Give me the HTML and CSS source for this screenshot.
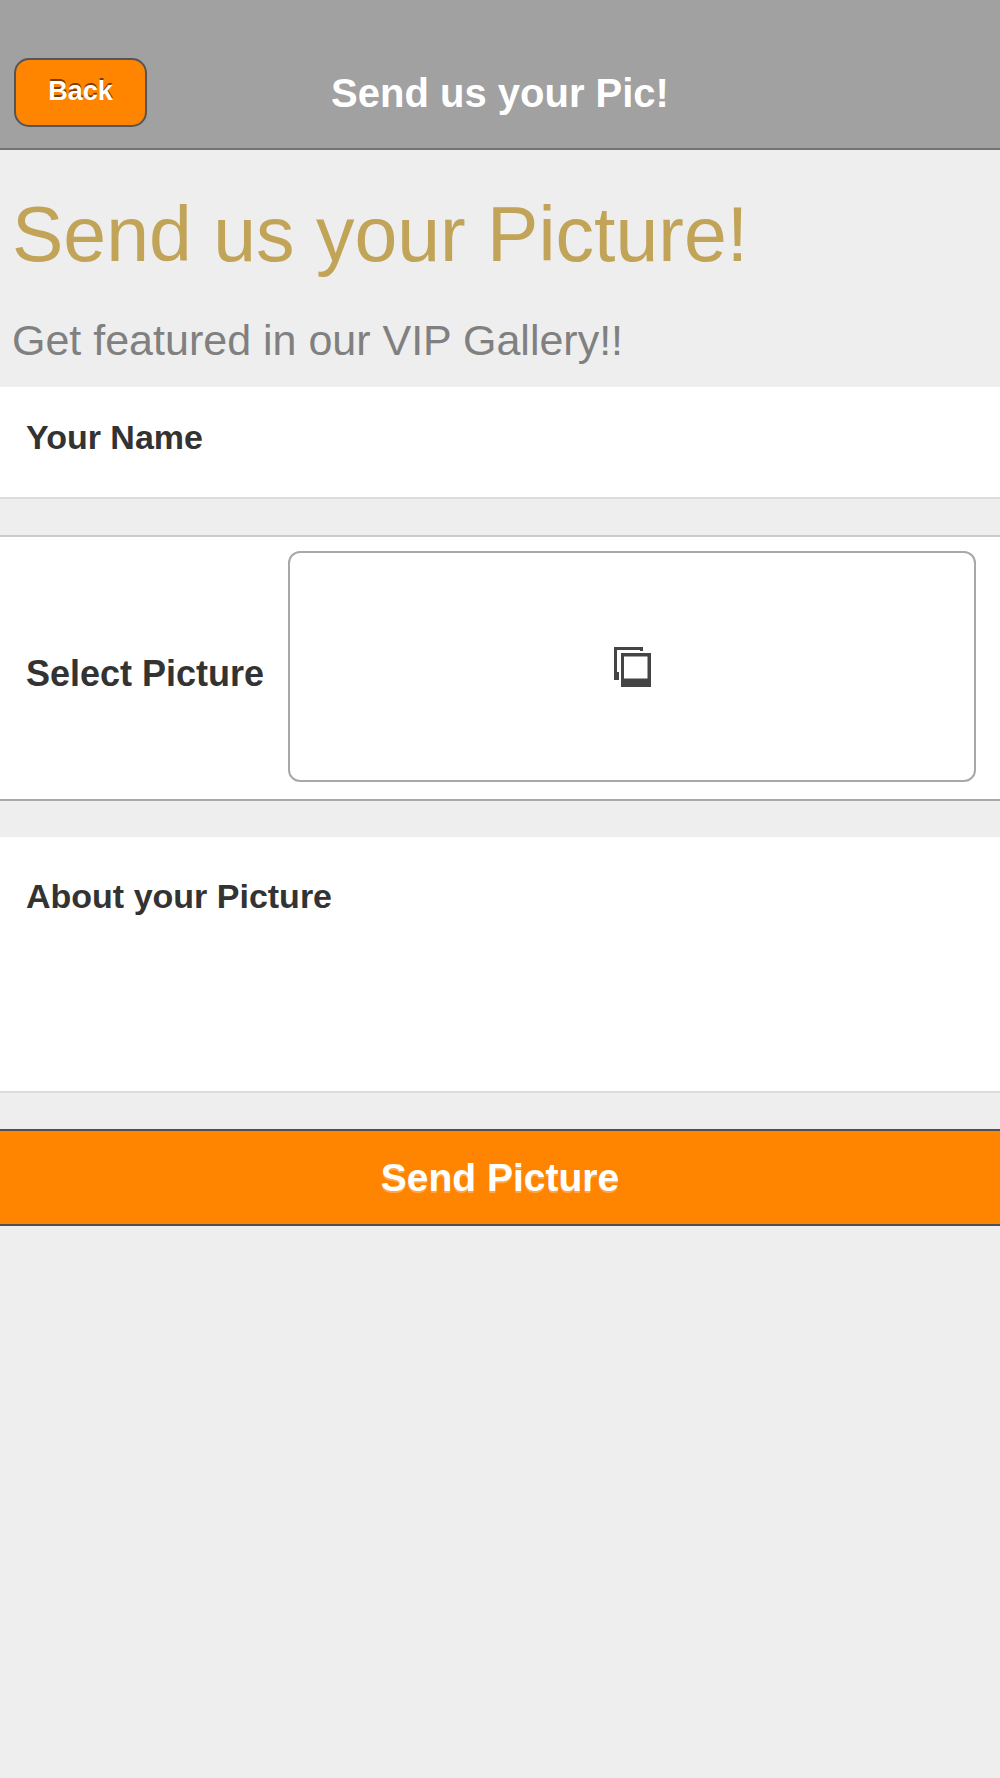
FILE: index.html
```html
<!DOCTYPE html>
<html lang="en">
<head>
    <meta charset="UTF-8">
    <meta name="viewport" content="width=device-width, initial-scale=1.0">
    <title>Send us your Pic!</title>
    <link rel="stylesheet" href="styles.css">
</head>
<body>
    <header class="top-bar">
        <button type="button" class="back-button">Back</button>
        <div class="top-title">Send us your Pic!</div>
    </header>

    <div class="intro">
        <h1>Send us your Picture!</h1>
        <p>Get featured in our VIP Gallery!!</p>
    </div>

    <form id="pictureForm" method="post" enctype="multipart/form-data">
        <div class="field name-field">
            <label for="nameInput">Your Name</label>
            <input type="text" id="nameInput" name="name">
        </div>

        <div class="field picture-field">
            <label for="pictureInput">Select Picture</label>
            <div class="picture-box">
                <svg class="picture-icon" width="38" height="41" viewBox="0 0 38 41" aria-hidden="true">
                    <path d="M1 1h29v4h-3V4H4v22h2v8H1z"/>
                    <path fill-rule="evenodd" d="M8 7h30v34H8zM11 10.500v22h23.500v-22z"/>
                </svg>
                <input type="file" id="pictureInput" name="picture" accept="image/*">
            </div>
        </div>

        <div class="field about-field">
            <label for="aboutInput">About your Picture</label>
            <textarea id="aboutInput" name="about"></textarea>
        </div>

        <button type="submit" class="send-button">Send Picture</button>
    </form>
</body>
</html>
```

FILE: styles.css
```css
body {
    margin: 0;
    background-color: #eeeeee;
    color: #333;
    font-family: "Liberation Sans", Arial, sans-serif;
}
.top-bar {
    display: grid;
    grid-template-columns: 1fr auto 1fr;
    align-items: center;
    padding: 58px 14px 21px;
    background-color: #a1a1a1;
    border-bottom: 2px solid #737373;
}
.top-title {
    color: white;
    font-size: 40px;
    font-weight: bold;
    line-height: 48px;
}
button {
    background-color: #ff8500;
    color: white;
    font-family: inherit;
    font-weight: bold;
    cursor: pointer;
}
.back-button {
    justify-self: start;
    width: 133px;
    height: 69px;
    padding: 0 0 2px;
    border: 2px solid #555;
    border-radius: 15px;
    font-size: 27px;
    text-shadow: 0 -2px 0 rgba(0, 0, 0, 0.55);
}
.intro {
    padding: 39px 12px 22px;
}
.intro h1 {
    margin: 0 0 36px;
    color: #c1a458;
    font-size: 77px;
    font-weight: normal;
    line-height: 90px;
}
.intro p {
    margin: 0;
    color: #808080;
    font-size: 43px;
    line-height: 50px;
}
.field {
    display: flex;
    margin-bottom: 36px;
    padding: 0 24px 0 26px;
    background-color: white;
    border-bottom: 2px solid #dcdcdc;
}
.field label {
    flex: none;
    font-size: 34px;
    font-weight: bold;
    line-height: 40px;
}
.field input[type="text"], .field textarea {
    flex: 1;
    min-width: 0;
    margin-left: 20px;
    padding: 0;
    border: none;
    outline: none;
    background: none;
    font-family: inherit;
    font-size: 34px;
}
.name-field {
    padding-top: 30px;
    padding-bottom: 40px;
}
.picture-field {
    align-items: center;
    padding-top: 14px;
    padding-bottom: 17px;
    border-top: 2px solid #cbcbcb;
    border-bottom-color: #a8a8a8;
}
.picture-field label {
    width: 262px;
    padding-top: 14px;
    font-size: 36px;
}
.picture-box {
    position: relative;
    display: flex;
    flex: 1;
    align-items: center;
    justify-content: center;
    height: 227px;
    border: 2px solid #a8a8a8;
    border-radius: 12px;
}
.picture-icon {
    fill: #444;
}
/* the file input covers the whole box so a tap anywhere opens it */
.picture-box input {
    position: absolute;
    top: 0;
    left: 0;
    width: 100%;
    height: 100%;
    opacity: 0;
    cursor: pointer;
}
.about-field {
    padding-top: 39px;
}
.about-field textarea {
    height: 215px;
    resize: none;
    line-height: 40px;
}
.send-button {
    display: block;
    width: 100%;
    height: 97px;
    padding: 0;
    border: solid #505050;
    border-width: 2px 0;
    font-size: 39px;
    text-shadow: 0 2px 0 rgba(255, 255, 255, 0.3);
}
```
